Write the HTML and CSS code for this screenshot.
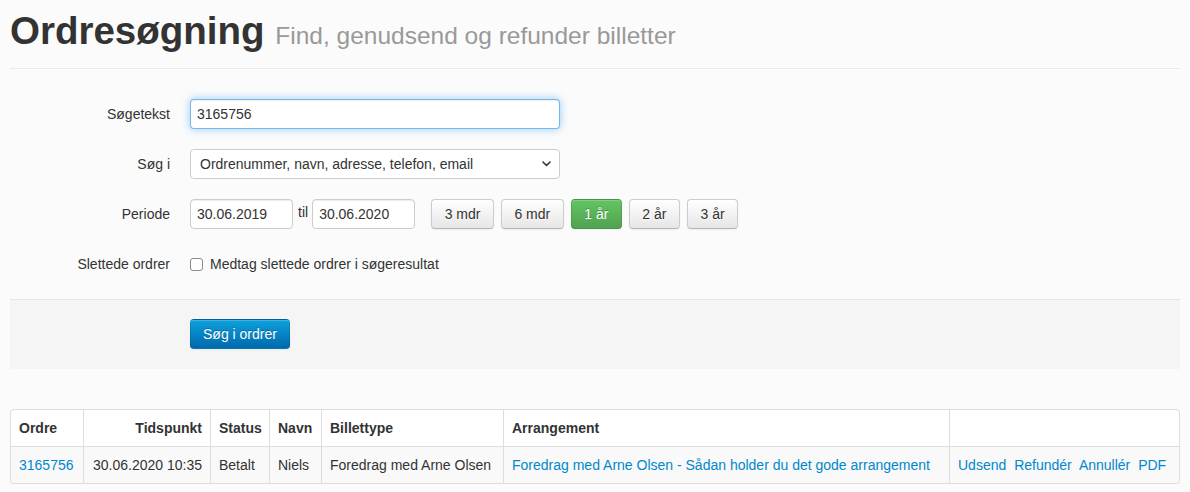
FILE: index.html
```html
<!DOCTYPE html>
<html lang="da">
<head>
<meta charset="utf-8">
<title>Ordresøgning</title>
<link rel="stylesheet" href="styles.css">
</head>
<body>
<div class="page">
  <div class="page-header">
    <h1>Ordresøgning <small>Find, genudsend og refunder billetter</small></h1>
  </div>

  <form class="form-horizontal">
    <div class="control-group">
      <label class="control-label">Søgetekst</label>
      <div class="controls">
        <input class="input-xlarge focused" type="text" value="3165756">
      </div>
    </div>

    <div class="control-group">
      <label class="control-label">Søg i</label>
      <div class="controls">
        <div class="select-wrap">
          <select class="input-xlarge">
            <option>Ordrenummer, navn, adresse, telefon, email</option>
          </select>
          <svg class="chevron" width="9" height="6" viewBox="0 0 9 6"><polyline points="1,1 4.5,4.5 8,1" fill="none" stroke="#333" stroke-width="1.6" stroke-linecap="round" stroke-linejoin="round"/></svg>
        </div>
      </div>
    </div>

    <div class="control-group">
      <label class="control-label">Periode</label>
      <div class="controls period">
        <input class="input-small" type="text" value="30.06.2019">
        <span class="til">til</span>
        <input class="input-small" type="text" value="30.06.2020">
        <div class="btn-row">
          <button type="button" class="btn">3 mdr</button>
          <button type="button" class="btn">6 mdr</button>
          <button type="button" class="btn btn-success">1 år</button>
          <button type="button" class="btn">2 år</button>
          <button type="button" class="btn">3 år</button>
        </div>
      </div>
    </div>

    <div class="control-group">
      <label class="control-label">Slettede ordrer</label>
      <div class="controls">
        <label class="checkbox"><input type="checkbox"><span>Medtag slettede ordrer i søgeresultat</span></label>
      </div>
    </div>

    <div class="form-actions">
      <button type="button" class="btn btn-primary">Søg i ordrer</button>
    </div>
  </form>

  <table class="table">
    <thead>
      <tr>
        <th class="c-ordre">Ordre</th>
        <th class="c-tid right">Tidspunkt</th>
        <th class="c-status">Status</th>
        <th class="c-navn">Navn</th>
        <th class="c-type">Billettype</th>
        <th class="c-arr">Arrangement</th>
        <th class="c-act"></th>
      </tr>
    </thead>
    <tbody>
      <tr>
        <td><a href="#">3165756</a></td>
        <td class="right">30.06.2020 10:35</td>
        <td>Betalt</td>
        <td>Niels</td>
        <td>Foredrag med Arne Olsen</td>
        <td><a href="#">Foredrag med Arne Olsen - Sådan holder du det gode arrangement</a></td>
        <td class="actions"><a href="#">Udsend</a> <a href="#">Refundér</a> <a href="#">Annullér</a> <a href="#">PDF</a></td>
      </tr>
    </tbody>
  </table>
</div>
</body>
</html>
```

FILE: styles.css
```css
* { box-sizing: border-box; }

body {
  margin: 0;
  background: #fbfbfb;
  font-family: "Liberation Sans", Arial, Helvetica, sans-serif;
  font-size: 14px;
  line-height: 20px;
  color: #333;
}

.page {
  padding: 0 10px;
}

.page-header {
  padding-top: 11px;
  padding-bottom: 17px;
  border-bottom: 1px solid #eaeaea;
  margin-bottom: 30px;
}

h1 {
  margin: 0;
  height: 40px;
  font-size: 38.5px;
  line-height: 40px;
  font-weight: bold;
  color: #333;
}

h1 small {
  font-size: 24.5px;
  line-height: 1;
  font-weight: normal;
  color: #999;
}

form {
  margin: 0;
}

.control-group {
  display: flex;
  min-height: 30px;
  margin-bottom: 20px;
}

.control-label {
  width: 160px;
  flex: none;
  text-align: right;
  padding-top: 5px;
}

.controls {
  margin-left: 20px;
}

input[type="text"],
select {
  height: 30px;
  padding: 4px 6px;
  font-family: inherit;
  font-size: 14px;
  line-height: 20px;
  color: #333;
  background: #fff;
  border: 1px solid #ccc;
  border-radius: 4px;
  box-shadow: inset 0 1px 1px rgba(0, 0, 0, 0.075);
  outline: none;
}

.input-xlarge {
  width: 370px;
}

.input-small {
  width: 103px;
}

input.focused {
  border-color: rgba(82, 168, 236, 0.8);
  box-shadow: inset 0 1px 1px rgba(0, 0, 0, 0.075), 0 0 8px rgba(82, 168, 236, 0.6);
}

.select-wrap {
  position: relative;
  width: 370px;
}

select {
  -webkit-appearance: none;
  appearance: none;
  padding-left: 9px;
  box-shadow: none;
}

.chevron {
  position: absolute;
  right: 9px;
  top: 12px;
}

.period {
  display: flex;
  align-items: flex-start;
}

.til {
  margin: 3px 4px 0 5px;
}

.btn-row {
  display: flex;
  gap: 7px;
  margin-left: 16px;
}

.btn {
  height: 30px;
  padding: 4px 12.5px;
  font-family: inherit;
  font-size: 14px;
  line-height: 20px;
  color: #333;
  text-shadow: 0 1px 1px rgba(255, 255, 255, 0.75);
  background: linear-gradient(#ffffff, #e6e6e6);
  border: 1px solid #cccccc;
  border-bottom-color: #b3b3b3;
  border-radius: 4px;
  box-shadow: inset 0 1px 0 rgba(255, 255, 255, 0.2), 0 1px 2px rgba(0, 0, 0, 0.05);
  cursor: pointer;
}

.btn-success {
  color: #fff;
  text-shadow: 0 -1px 0 rgba(0, 0, 0, 0.25);
  background: linear-gradient(#62c462, #51a351);
  border-color: rgba(0, 0, 0, 0.1) rgba(0, 0, 0, 0.1) rgba(0, 0, 0, 0.25);
}

.btn-primary {
  padding: 4px 12px;
  color: #fff;
  text-shadow: 0 -1px 0 rgba(0, 0, 0, 0.25);
  background: linear-gradient(#0ea1dd, #0069ae);
  border-color: rgba(0, 0, 0, 0.1) rgba(0, 0, 0, 0.1) rgba(0, 0, 0, 0.25);
}

.checkbox {
  display: flex;
  align-items: center;
  padding-top: 5px;
  min-height: 25px;
}

.checkbox input {
  -webkit-appearance: none;
  appearance: none;
  width: 13px;
  height: 13px;
  margin: 0 7px 0 0;
  border: 1px solid #8a8a8a;
  border-radius: 3px;
  background: #fff;
}

.form-actions {
  background: #f5f5f5;
  border-top: 1px solid #e5e5e5;
  padding: 19px 20px 20px 180px;
  margin-bottom: 40px;
}

.table {
  width: 100%;
  table-layout: fixed;
  border-collapse: separate;
  border-spacing: 0;
  border: 1px solid #ddd;
  border-left: 0;
  border-radius: 4px;
  background: #fff;
}

.table th,
.table td {
  padding: 8px;
  line-height: 20px;
  text-align: left;
  vertical-align: top;
  border-left: 1px solid #ddd;
  white-space: nowrap;
}

.table th {
  font-weight: bold;
}

.table td {
  border-top: 1px solid #ddd;
  background: #f9f9f9;
}

.table th:first-child { border-top-left-radius: 4px; }
.table td:first-child { border-bottom-left-radius: 4px; }
.table th:last-child { border-top-right-radius: 4px; }
.table td:last-child { border-bottom-right-radius: 4px; }

.table .right {
  text-align: right;
}

.c-ordre { width: 73px; }
.c-tid { width: 127px; }
.c-status { width: 59px; }
.c-navn { width: 52px; }
.c-type { width: 182px; }
.c-arr { width: 446px; }

a {
  color: #0088cc;
  text-decoration: none;
}

.actions a {
  margin-right: 4px;
}
```
